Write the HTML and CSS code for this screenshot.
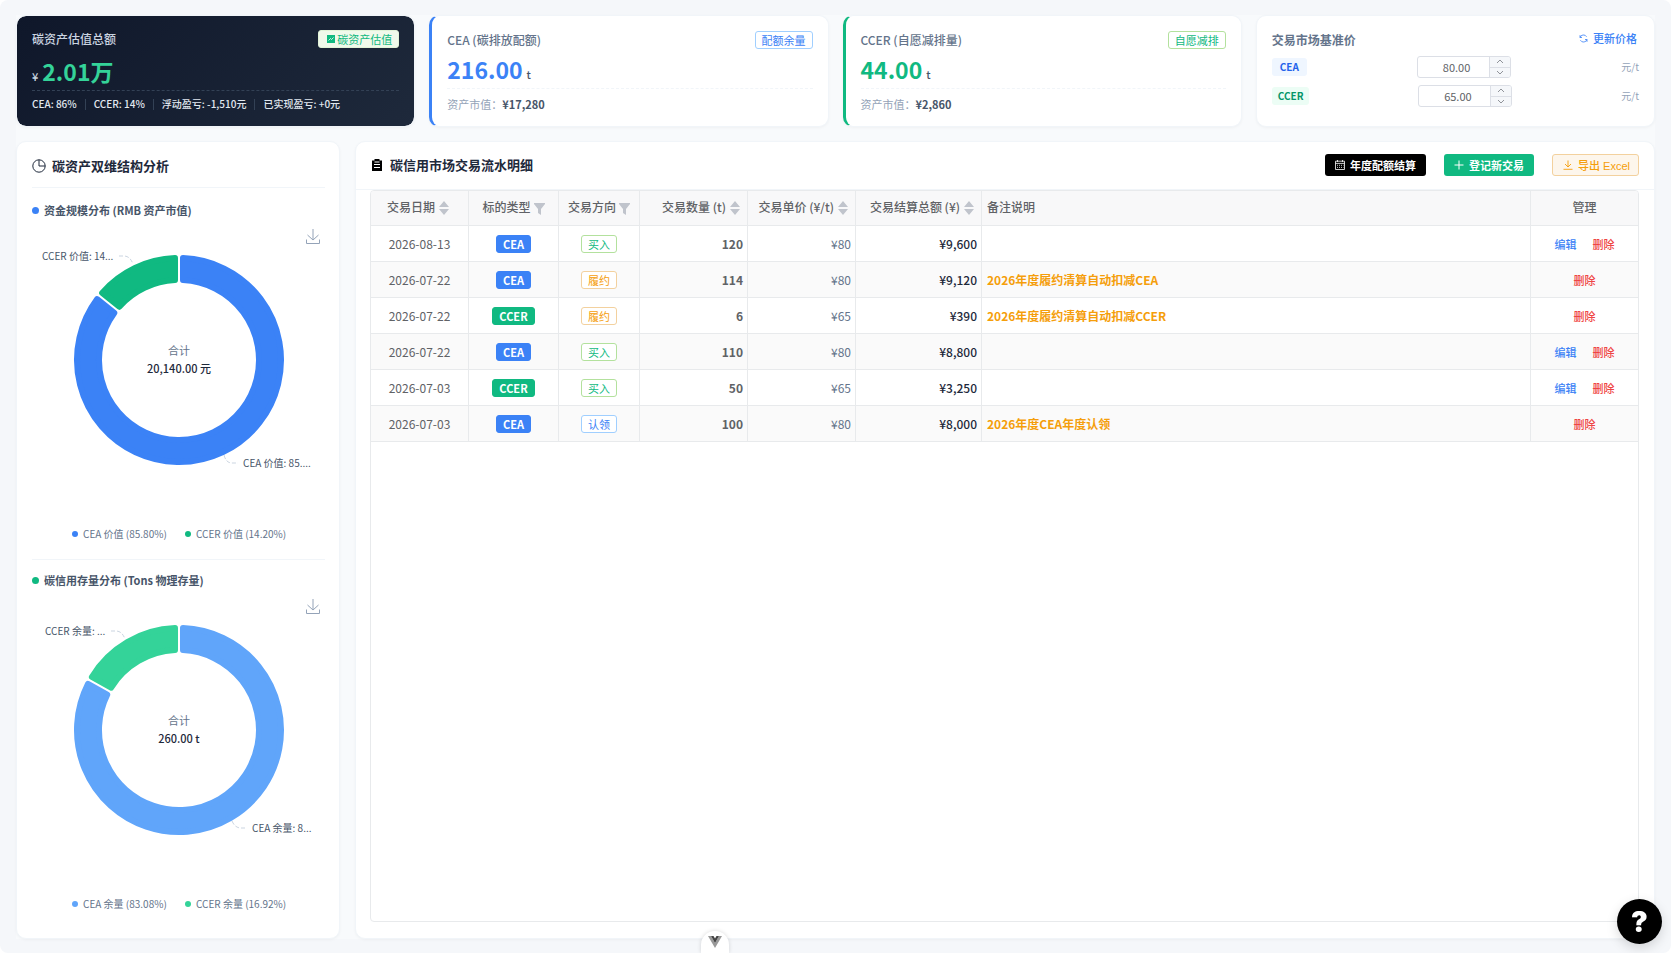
FILE: index.html
```html
<!DOCTYPE html>
<html lang="zh-CN">
  <head>
    <meta charset="utf-8">
    <title>碳资产管理</title>
    <link rel="stylesheet" href="styles.css">
  </head>

  <body>
    <svg width="0" height="0" class="sprite">
      <symbol id="i-sort" viewBox="0 0 10 14"><path d="M5 0l5 6H0zM5 14l5-6H0z" fill="#c0c4cc"/></symbol>
      <symbol id="i-filter" viewBox="0 0 11 12"><path d="M0 0h11v1L7 6v6L4 10V6L0 1z" fill="#c0c4cc"/></symbol>
      <symbol id="i-download" viewBox="0 0 14 15"><path d="M7 0v10M1.500 6L7 11 12.500 6M.5 10.500v4h13v-4" fill="none" stroke="currentColor"/></symbol>
      <symbol id="i-up" viewBox="0 0 8 5"><path d="M1 4l3-3 3 3" fill="none" stroke="#909399"/></symbol>
      <symbol id="i-down" viewBox="0 0 8 5"><path d="M1 1l3 3 3-3" fill="none" stroke="#909399"/></symbol>
    </svg>

    <div class="page">
      <main class="content">
        <section class="cards">
          <div class="card card-dark">
            <div class="card-head">
              <h2>碳资产估值总额</h2>
              <span class="tag tag-valuation">
                <svg width="8" height="8" viewBox="0 0 8 8"><rect width="8" height="8" fill="#10b981"/><path d="M1.5 5.5l2-2 1 1 2-2" fill="none" stroke="#fff" stroke-width=".8"/></svg>碳资产估值</span>
            </div>
            <div class="value"><small>¥</small>2.01万</div>
            <div class="card-foot">
              <span>CEA: 86%</span><i></i><span>CCER: 14%</span><i></i><span>浮动盈亏: -1,510元</span><i></i><span>已实现盈亏: +0元</span>
            </div>
          </div>

          <div class="card card-cea">
            <div class="card-head">
              <h2>CEA (碳排放配额)</h2>
              <span class="tag tag-blue">配额余量</span>
            </div>
            <div class="value">216.00<small>t</small></div>
            <div class="card-foot">资产市值：<b>¥17,280</b></div>
          </div>

          <div class="card card-ccer">
            <div class="card-head">
              <h2>CCER (自愿减排量)</h2>
              <span class="tag tag-green">自愿减排</span>
            </div>
            <div class="value">44.00<small>t</small></div>
            <div class="card-foot">资产市值：<b>¥2,860</b></div>
          </div>

          <div class="card card-price">
            <div class="card-head">
              <h2>交易市场基准价</h2>
              <button class="refresh" type="button">
                <svg width="9" height="9" viewBox="0 0 9 9" fill="none" stroke="currentColor" stroke-width=".8"><path d="M1 3.5a3.6 3.6 0 0 1 6.6-.7M8 5.5a3.6 3.6 0 0 1-6.6.7M1 1.2v2.3h2M8 7.8V5.5H6"/></svg>
                更新价格
              </button>
            </div>
            <div class="price-row">
              <label class="pill pill-cea" for="cea-price">CEA</label>
              <div class="stepper">
                <input id="cea-price" type="text" value="80.00">
                <div class="steps">
                  <button type="button" aria-label="增加"><svg width="8" height="5"><use href="#i-up"/></svg></button>
                  <button type="button" aria-label="减少"><svg width="8" height="5"><use href="#i-down"/></svg></button>
                </div>
              </div>
              <span class="unit">元/t</span>
            </div>
            <div class="price-row">
              <label class="pill pill-ccer" for="ccer-price">CCER</label>
              <div class="stepper">
                <input id="ccer-price" type="text" value="65.00">
                <div class="steps">
                  <button type="button" aria-label="增加"><svg width="8" height="5"><use href="#i-up"/></svg></button>
                  <button type="button" aria-label="减少"><svg width="8" height="5"><use href="#i-down"/></svg></button>
                </div>
              </div>
              <span class="unit">元/t</span>
            </div>
          </div>
        </section>

        <section class="panels">
          <div class="panel analysis">
            <div class="analysis-head">
              <svg width="14" height="14" viewBox="0 0 14 14" fill="none" stroke="#1e293b"><path d="M7 .8a6.200 6.200 0 1 0 6.200 6.200H7z"/><path d="M7 .8A6.200 6.200 0 0 1 13.200 7"/></svg>
              <h1>碳资产双维结构分析</h1>
            </div>

            <div class="chart-block">
              <h3><span class="dot dot-blue"></span>资金规模分布 (RMB 资产市值)</h3>
              <div class="chart">
                <svg class="donut" viewBox="0 0 293 320">
                  <g stroke-width="6" stroke-linejoin="round">
                    <path fill="#3b82f6" stroke="#3b82f6" d="M151 32.08A102 102 0 1 1 65.14 73.14L82.29 86.96A80 80 0 1 0 151 54.1z"/>
                    <path fill="#10b981" stroke="#10b981" d="M70.16 66.92A102 102 0 0 1 143 32.08V54.1A80 80 0 0 0 87.31 80.74z"/>
                  </g>
                  <path class="leader" d="M87 30h5q6 0 9 8M192 229q2 8 8 8h6"/>
                  <text class="label" x="10" y="34">CCER 价值: 14...</text>
                  <text class="label" x="211" y="241">CEA 价值: 85....</text>
                  <text class="total-name" x="147" y="129">合计</text>
                  <text class="total" x="147" y="147">20,140.00 元</text>
                  <circle cx="43" cy="308" r="3" fill="#3b82f6"/>
                  <text class="legend" x="51" y="312">CEA 价值 (85.80%)</text>
                  <circle cx="156" cy="308" r="3" fill="#10b981"/>
                  <text class="legend" x="164" y="312">CCER 价值 (14.20%)</text>
                </svg>
                <button class="save" type="button" aria-label="下载图表"><svg width="14" height="15"><use href="#i-download"/></svg></button>
              </div>
            </div>

            <div class="chart-block">
              <h3><span class="dot dot-green"></span>碳信用存量分布 (Tons 物理存量)</h3>
              <div class="chart">
                <svg class="donut" viewBox="0 0 293 320">
                  <g stroke-width="6" stroke-linejoin="round">
                    <path fill="#60a5fa" stroke="#60a5fa" d="M151 32.08A102 102 0 1 1 55.99 87.94L75.23 98.64A80 80 0 1 0 151 54.1z"/>
                    <path fill="#34d399" stroke="#34d399" d="M59.89 80.94A102 102 0 0 1 143 32.08V54.1A80 80 0 0 0 79.13 91.64z"/>
                  </g>
                  <path class="leader" d="M79 35h5q6 0 9 8M200 225q3 7 9 7h6"/>
                  <text class="label" x="13" y="39">CCER 余量: ...</text>
                  <text class="label" x="220" y="236">CEA 余量: 8...</text>
                  <text class="total-name" x="147" y="129">合计</text>
                  <text class="total" x="147" y="147">260.00 t</text>
                  <circle cx="43" cy="308" r="3" fill="#60a5fa"/>
                  <text class="legend" x="51" y="312">CEA 余量 (83.08%)</text>
                  <circle cx="156" cy="308" r="3" fill="#34d399"/>
                  <text class="legend" x="164" y="312">CCER 余量 (16.92%)</text>
                </svg>
                <button class="save" type="button" aria-label="下载图表"><svg width="14" height="15"><use href="#i-download"/></svg></button>
              </div>
            </div>
          </div>

          <div class="panel records">
            <div class="records-head">
              <svg width="10" height="12" viewBox="0 0 10 12"><path d="M0 1.5h2.5V0h5v1.5H10V12H0z"/><path d="M2.5 3h5M2 5.5h6M2 8.5h6" stroke="#fff" fill="none"/></svg>
              <h1>碳信用市场交易流水明细</h1>
              <div class="actions">
                <button class="btn btn-black" type="button">
                  <svg width="10" height="10" viewBox="0 0 10 10" fill="none" stroke="currentColor" stroke-width=".8"><path d="M.5 1.2h9v8.3h-9zM.5 3.4h9M2.5 0v2M7.5 0v2"/><path d="M2 5.3h6.5M2 7.4h6.5" stroke-dasharray="1 1"/></svg>
                  年度配额结算
                </button>
                <button class="btn btn-green" type="button">
                  <svg width="10" height="10" viewBox="0 0 10 10" stroke="currentColor"><path d="M5 .5v9M.5 5h9"/></svg>
                  登记新交易
                </button>
                <button class="btn btn-orange" type="button">
                  <svg width="10" height="10" viewBox="0 0 10 10" fill="none" stroke="currentColor" stroke-width=".9"><path d="M5 .5v6.5M2 4l3 3 3-3M.5 9.3h9"/></svg>
                  导出 Excel
                </button>
              </div>
            </div>

            <div class="table-wrap">
              <table>
                <colgroup>
                  <col class="w-date"><col class="w-type"><col class="w-side"><col class="w-num"><col class="w-num"><col class="w-total"><col><col class="w-manage">
                </colgroup>
                <thead>
                  <tr>
                    <th>交易日期<svg class="sort"><use href="#i-sort"/></svg></th>
                    <th>标的类型<svg class="filter"><use href="#i-filter"/></svg></th>
                    <th>交易方向<svg class="filter"><use href="#i-filter"/></svg></th>
                    <th class="right">交易数量 (t)<svg class="sort"><use href="#i-sort"/></svg></th>
                    <th class="right">交易单价 (¥/t)<svg class="sort"><use href="#i-sort"/></svg></th>
                    <th class="right">交易结算总额 (¥)<svg class="sort"><use href="#i-sort"/></svg></th>
                    <th class="left">备注说明</th>
                    <th>管理</th>
                  </tr>
                </thead>
                <tbody>
                  <tr>
                    <td>2026-08-13</td>
                    <td><span class="tag tag-cea">CEA</span></td>
                    <td><span class="tag tag-green">买入</span></td>
                    <td class="right amount">120</td>
                    <td class="right price">¥80</td>
                    <td class="right sum">¥9,600</td>
                    <td class="left note"></td>
                    <td><a class="edit" href="#">编辑</a><a class="del" href="#">删除</a></td>
                  </tr>
                  <tr>
                    <td>2026-07-22</td>
                    <td><span class="tag tag-cea">CEA</span></td>
                    <td><span class="tag tag-orange">履约</span></td>
                    <td class="right amount">114</td>
                    <td class="right price">¥80</td>
                    <td class="right sum">¥9,120</td>
                    <td class="left note">2026年度履约清算自动扣减CEA</td>
                    <td><a class="del" href="#">删除</a></td>
                  </tr>
                  <tr>
                    <td>2026-07-22</td>
                    <td><span class="tag tag-ccer">CCER</span></td>
                    <td><span class="tag tag-orange">履约</span></td>
                    <td class="right amount">6</td>
                    <td class="right price">¥65</td>
                    <td class="right sum">¥390</td>
                    <td class="left note">2026年度履约清算自动扣减CCER</td>
                    <td><a class="del" href="#">删除</a></td>
                  </tr>
                  <tr>
                    <td>2026-07-22</td>
                    <td><span class="tag tag-cea">CEA</span></td>
                    <td><span class="tag tag-green">买入</span></td>
                    <td class="right amount">110</td>
                    <td class="right price">¥80</td>
                    <td class="right sum">¥8,800</td>
                    <td class="left note"></td>
                    <td><a class="edit" href="#">编辑</a><a class="del" href="#">删除</a></td>
                  </tr>
                  <tr>
                    <td>2026-07-03</td>
                    <td><span class="tag tag-ccer">CCER</span></td>
                    <td><span class="tag tag-green">买入</span></td>
                    <td class="right amount">50</td>
                    <td class="right price">¥65</td>
                    <td class="right sum">¥3,250</td>
                    <td class="left note"></td>
                    <td><a class="edit" href="#">编辑</a><a class="del" href="#">删除</a></td>
                  </tr>
                  <tr>
                    <td>2026-07-03</td>
                    <td><span class="tag tag-cea">CEA</span></td>
                    <td><span class="tag tag-blue">认领</span></td>
                    <td class="right amount">100</td>
                    <td class="right price">¥80</td>
                    <td class="right sum">¥8,000</td>
                    <td class="left note">2026年度CEA年度认领</td>
                    <td><a class="del" href="#">删除</a></td>
                  </tr>
                </tbody>
              </table>
            </div>
          </div>
        </section>
      </main>
    </div>

    <button class="devtools" type="button" aria-label="Vue DevTools">
      <svg width="14" height="12" viewBox="0 0 14 12"><path d="M0 0h3l4 7 4-7h3L7 12z" fill="#999"/><path d="M3 0h2.500L7 2.500 8.500 0H11L7 7z" fill="#444"/></svg>
    </button>
    <button class="help" type="button">?</button>
  </body>
</html>
```
FILE: styles.css
```css
* {
  box-sizing: border-box;
}

body {
  margin: 0;
  background: #fff;
  color: #606266;
  font-family: "Noto Sans CJK SC", "Noto Sans", sans-serif;
  font-size: 12px;
  line-height: 18px;
}

h1,
h2,
h3 {
  margin: 0;
}

button,
input {
  margin: 0;
  padding: 0;
  border: 0;
  background: none;
  font-family: inherit;
}

a {
  text-decoration: none;
}

.sprite {
  position: absolute;
}

.page {
  min-height: 100vh;
  padding: 15px 16px 14px;
  display: flex;
  background: #f5f7fa;
  border-radius: 8px;
}

.content {
  flex: 1;
  min-width: 0;
  display: flex;
  flex-direction: column;
  gap: 14px;
  background: #f8fafc;
}

/* top cards */
.cards {
  display: grid;
  grid-template-columns: repeat(4, 1fr);
  gap: 14px;
}

.card {
  height: 112px;
  padding: 14px 15px;
  display: flex;
  flex-direction: column;
  background: #fff;
  border: 1px solid #f1f5f9;
  border-radius: 10px;
  box-shadow: 0 1px 3px #0000000a;
}

.card-head {
  display: flex;
  justify-content: space-between;
  align-items: center;
  height: 20px;
}

.card-head h2 {
  font-size: 12px;
  font-weight: 500;
  color: #64748b;
}

.value {
  font-size: 23px;
  line-height: 28px;
  margin-top: 5px;
  font-weight: 700;
}

.value small {
  margin-left: 4px;
  font-size: 11px;
  font-weight: 500;
  color: #475569;
}

.card-foot {
  margin-top: auto;
  padding-top: 7px;
  display: flex;
  align-items: center;
  border-top: 1px dashed #f1f5f9;
  font-size: 11px;
  line-height: 16px;
  color: #94a3b8;
}

.card-foot b {
  color: #475569;
}

.card-dark {
  background: linear-gradient(135deg, #0f172a, #1e293b) padding-box;
}

.card-dark h2 {
  color: #cbd5e1;
}

.card-dark .value {
  margin-top: 9px;
  color: #34d399;
}

.card-dark .value small {
  margin: 0 4px 0 0;
  color: #cbd5e1;
}

.card-dark .card-foot {
  padding-top: 5px;
  border-color: #334155;
  font-size: 10px;
  font-weight: 500;
  color: #e2e8f0;
}

.card-dark .card-foot i {
  width: 1px;
  height: 11px;
  margin: 0 8px;
  background: #334155;
}

.card-cea {
  border-left: 3px solid #3b82f6;
}

.card-cea .value {
  color: #3b82f6;
}

.card-ccer {
  border-left: 3px solid #10b981;
}

.card-ccer .value {
  color: #10b981;
}

.tag {
  display: inline-flex;
  align-items: center;
  gap: 2px;
  height: 18px;
  padding: 0 6px;
  border: 1px solid;
  border-radius: 3px;
  font-size: 11px;
  line-height: 16px;
}

.tag-valuation {
  padding-left: 8px;
  color: #10b981;
  background: #f0f9eb;
  border-color: #e1f3d8;
}

.tag-blue {
  color: #3b82f6;
  background: #fff;
  border-color: #a0cfff;
}

.tag-green {
  color: #10b981;
  background: #fff;
  border-color: #b3e19d;
}

.tag-orange {
  color: #f59e0b;
  background: #fff;
  border-color: #f3d19e;
}

.tag-cea {
  color: #fff;
  font-weight: 700;
  background: #3b82f6;
  border-color: #3b82f6;
}

.tag-ccer {
  color: #fff;
  font-weight: 700;
  background: #10b981;
  border-color: #10b981;
}

/* base price card */
.card-price h2 {
  font-weight: 700;
}

.card-price .card-head {
  margin-bottom: -1px;
}

.refresh {
  display: flex;
  align-items: center;
  gap: 5px;
  height: 18px;
  padding-right: 2px;
  margin-bottom: 4px;
  color: #3b82f6;
  font-size: 11px;
  font-weight: 500;
}

.price-row {
  display: flex;
  justify-content: space-between;
  align-items: center;
  height: 22px;
  margin-top: 7px;
}

.pill {
  height: 18px;
  padding: 0 8px;
  border-radius: 3px;
  font-size: 10px;
  font-weight: 700;
}

.pill-cea {
  color: #2563eb;
  background: #eff6ff;
}

.pill-ccer {
  padding: 0 6px;
  color: #059669;
  background: #ecfdf5;
}

.stepper {
  display: flex;
  width: 94px;
  height: 22px;
  border: 1px solid #dcdfe6;
  border-radius: 3px;
  overflow: hidden;
}

.stepper input {
  flex: 1;
  min-width: 0;
  padding-left: 6px;
  text-align: center;
  font-size: 11px;
  color: #606266;
}

.steps {
  width: 21px;
  display: flex;
  flex-direction: column;
  border-left: 1px solid #dcdfe6;
  background: #f5f7fa;
}

.steps button {
  flex: 1;
  display: flex;
  align-items: center;
  justify-content: center;
}

.steps button + button {
  border-top: 1px solid #dcdfe6;
}

.unit {
  font-size: 10px;
  color: #94a3b8;
}

/* lower panels */
.panels {
  flex: 1;
  display: grid;
  grid-template-columns: 324px 1fr;
  gap: 15px;
}

.panel {
  min-width: 0;
  background: #fff;
  border: 1px solid #f1f5f9;
  border-radius: 10px;
  box-shadow: 0 1px 3px #0000000a;
}

.panel h1 {
  font-size: 13px;
  font-weight: 700;
  color: #1e293b;
}

.analysis {
  padding: 0 14px 0 15px;
}

.analysis-head {
  display: flex;
  align-items: center;
  gap: 6px;
  height: 46px;
  padding-top: 2px;
  border-bottom: 1px solid #f1f5f9;
}

.chart-block {
  padding-top: 13px;
}

.chart-block + .chart-block {
  padding-top: 11px;
  border-top: 1px solid #f1f5f9;
}

.chart-block h3 {
  display: flex;
  align-items: center;
  gap: 5px;
  font-size: 11px;
  color: #475569;
}

.dot {
  width: 7px;
  height: 7px;
  border-radius: 50%;
}

.dot-blue {
  background: #3b82f6;
}

.dot-green {
  background: #10b981;
}

.chart {
  position: relative;
  padding: 7px 0 13px;
}

.donut {
  display: block;
  width: 100%;
  height: 320px;
}

.donut text {
  font-size: 10px;
}

.label {
  fill: #475569;
}

.legend {
  fill: #64748b;
}

.donut .total-name {
  font-size: 11px;
  fill: #64748b;
  text-anchor: middle;
}

.donut .total {
  font-size: 11px;
  fill: #1e293b;
  font-weight: 500;
  text-anchor: middle;
}

.leader {
  fill: none;
  stroke: #cbd5e1;
  stroke-dasharray: 4 2;
}

.save {
  position: absolute;
  top: 10px;
  right: 5px;
  color: #94a3b8;
  line-height: 0;
}

/* transaction records */
.records {
  display: flex;
  flex-direction: column;
}

.records-head {
  display: flex;
  align-items: center;
  gap: 8px;
  height: 48px;
  padding: 0 15px 1px 16px;
  border-bottom: 1px solid #f1f5f9;
}

.actions {
  display: flex;
  gap: 18px;
  margin-left: auto;
}

.btn {
  display: flex;
  align-items: center;
  gap: 5px;
  height: 22px;
  padding: 0 10px;
  border-radius: 3px;
  font-family: "Liberation Sans", "Noto Sans CJK SC", sans-serif;
  font-size: 11px;
  font-weight: 700;
  color: #fff;
}

.btn-black {
  background: #000;
}

.btn-green {
  background: #10b981;
}

.btn-orange {
  padding: 0 8px 0 10px;
  font-weight: 500;
  color: #f59e0b;
  background: #fdf6ec;
  border: 1px solid #f3d19e;
}

.table-wrap {
  flex: 1;
  margin: 0 15px 16px 14px;
  border: 1px solid #e8eaec;
  border-radius: 4px;
  overflow: hidden;
}

table {
  width: 100%;
  table-layout: fixed;
  border-collapse: separate;
  border-spacing: 0;
}

.w-date {
  width: 98px;
}

.w-type {
  width: 90px;
}

.w-side {
  width: 81px;
}

.w-num {
  width: 108px;
}

.w-total {
  width: 126px;
}

.w-manage {
  width: 107px;
}

th,
td {
  height: 36px;
  padding: 0 4px;
  text-align: center;
  border-right: 1px solid #e8eaec;
  border-bottom: 1px solid #e8eaec;
  white-space: nowrap;
}

th:last-child,
td:last-child {
  border-right: 0;
}

th {
  height: 35px;
  padding-bottom: 2px;
  background: #f8f8f9;
  font-weight: 500;
}

tbody tr:nth-child(even) {
  background: #fafafa;
}

td .tag {
  vertical-align: middle;
}

.left {
  padding-left: 5px;
  text-align: left;
}

.right {
  text-align: right;
}

.sort {
  width: 10px;
  height: 14px;
  margin: 0 3px 0 4px;
  vertical-align: -3px;
}

.filter {
  width: 11px;
  height: 12px;
  margin-left: 3px;
  vertical-align: -3px;
}

.amount {
  font-weight: 700;
}

.price {
  color: #64748b;
}

.sum {
  color: #1e293b;
  font-weight: 500;
}

.note {
  color: #f59e0b;
  font-weight: 700;
}

.edit,
.del {
  font-size: 11px;
  font-weight: 500;
}

.edit {
  margin-right: 16px;
  color: #3b82f6;
}

.del {
  color: #ef4444;
}

/* floating buttons */
.help {
  position: fixed;
  right: 9px;
  bottom: 9px;
  width: 45px;
  height: 45px;
  border-radius: 50%;
  background: #000;
  color: #fff;
  font-family: Inter, sans-serif;
  font-size: 28px;
  font-weight: 900;
  box-shadow: 0 4px 12px #00000026;
}

.devtools {
  position: fixed;
  left: 701px;
  bottom: 0;
  width: 28px;
  height: 22px;
  border-radius: 14px 14px 0 0;
  background: #fff;
  box-shadow: 0 0 4px #00000026;
}
```
